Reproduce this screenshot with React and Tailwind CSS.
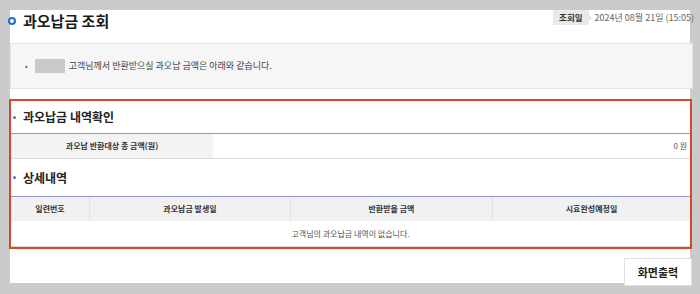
import React from 'react';

const font = { fontFamily: '"Noto Sans CJK KR", "Noto Sans", sans-serif' };

function SectionTitle({ children }) {
  return (
    <div className="flex items-center h-full pl-[2px]">
      <span className="w-[3px] h-[3px] rounded-full bg-[#5b6fc4] mr-[7px]" />
      <span className="text-[12px] font-bold text-[#222] leading-none">{children}</span>
    </div>
  );
}

export default function App() {
  const cols = ['일련번호', '과오납금 발생일', '반환받을 금액', '시효완성예정일'];
  const widths = ['w-[79px]', 'w-[201px]', 'w-[202px]', 'flex-1'];

  return (
    <div className="w-[700px] h-[294px] bg-[#cbcbcb] overflow-hidden pt-[10px] pl-[10px]" style={font}>
      <div className="w-[680px] h-[273px] bg-white">
        {/* title row */}
        <div className="h-[33px] flex justify-between items-start">
          <div className="flex items-center -ml-[2px] mt-[2px]">
            <span className="w-[8px] h-[8px] rounded-full border-2 border-[#1d6fc4] mr-[7px]" />
            <h1 className="text-[15px] font-bold text-[#1a1a1a] leading-[17px]">과오납금 조회</h1>
          </div>
          <div className="flex items-start -mr-[4px]">
            <span className="bg-[#e9e9e9] h-[15px] px-[6px] flex items-center text-[8.5px] font-bold text-[#333]">조회일</span>
            <span className="w-0 h-0 border-y-[3px] border-y-transparent border-l-[3px] border-l-[#e9e9e9] mt-[5px]" />
            <span className="text-[9px] text-[#666] ml-[3px] h-[15px] flex items-center">2024년 08월 21일 (15:05)</span>
          </div>
        </div>

        {/* notice box */}
        <div className="h-[46px] w-[683px] bg-[#f6f6f6] border border-[#e6e6e6] flex items-center pl-[14px]">
          <span className="text-[8px] text-[#666] mr-[7px]">•</span>
          <span className="w-[30px] h-[14px] bg-[#c9c9c9] mr-[4px]" />
          <span className="text-[9px] text-[#444]">고객님께서 반환받으실 과오납 금액은 아래와 같습니다.</span>
        </div>

        {/* highlighted area */}
        <div className="mt-[10px] -ml-[1px] w-[683px] border-2 border-[#d8472b] bg-white">
          <div className="h-[32px]">
            <SectionTitle>과오납금 내역확인</SectionTitle>
          </div>
          <div className="flex h-[26px] border-t border-[#8d95d0] border-b border-b-[#dcdcdc]">
            <div className="w-[202px] bg-[#f3f3f3] flex items-center justify-center text-[8px] font-bold text-[#333]">
              과오납 반환대상 총 금액(원)
            </div>
            <div className="flex-1 flex items-center justify-end pr-[3px] text-[8px] text-[#555]">0 원</div>
          </div>
          <div className="h-[37px]">
            <SectionTitle>상세내역</SectionTitle>
          </div>
          <div className="flex h-[25px] border-t border-[#8d95d0] bg-[#f1f1f1]">
            {cols.map((c, i) => (
              <div
                key={c}
                className={`${widths[i]} flex items-center justify-center text-[8px] font-bold text-[#333] ${i < 3 ? 'border-r border-[#e2e2e2]' : ''}`}
              >
                {c}
              </div>
            ))}
          </div>
          <div className="h-[26px] flex items-center justify-center text-[8px] text-[#555] border-b border-[#dcdcdc]">
            고객님의 과오납금 내역이 없습니다.
          </div>
        </div>

        {/* print button */}
        <div className="flex justify-end -mr-[2px] mt-[9px]">
          <button className="w-[68px] h-[28px] bg-white border border-[#dedede] text-[11px] font-bold text-[#222]">
            화면출력
          </button>
        </div>
      </div>
    </div>
  );
}
